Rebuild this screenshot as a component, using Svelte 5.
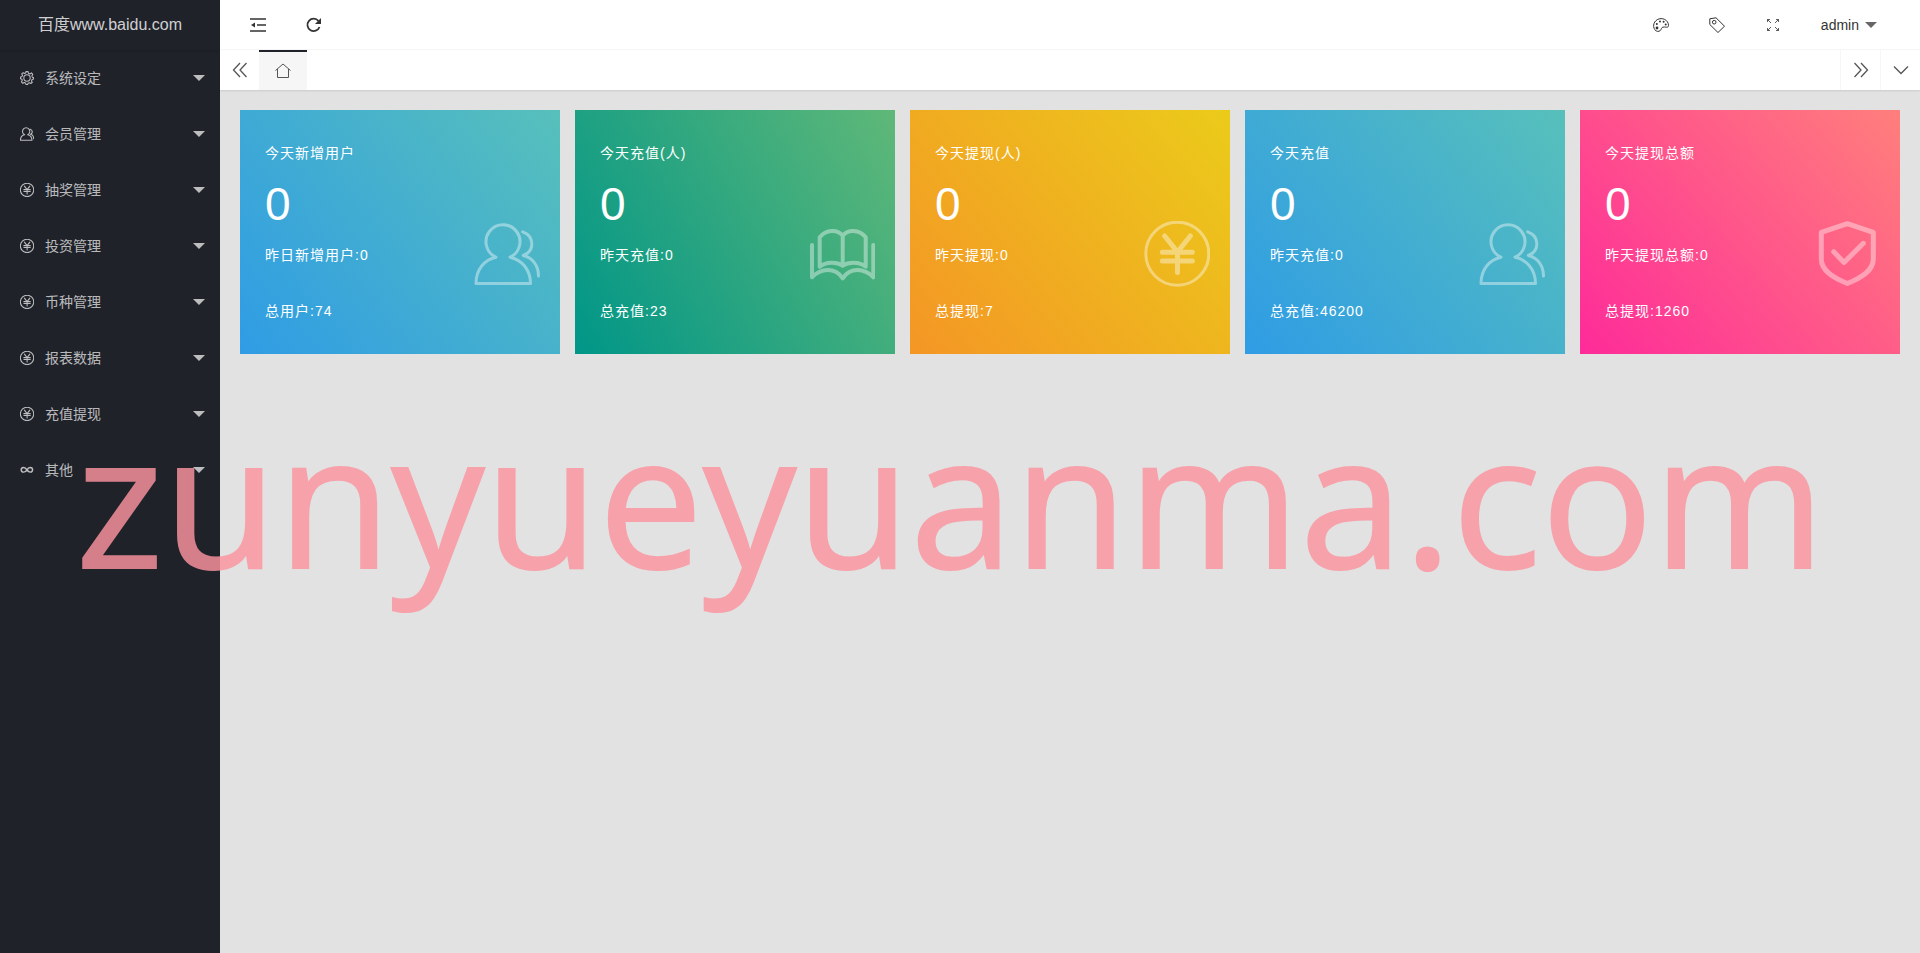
<script lang="ts">
  const menus = [
    { icon: 'gear', title: '系统设定' },
    { icon: 'users', title: '会员管理' },
    { icon: 'yen', title: '抽奖管理' },
    { icon: 'yen', title: '投资管理' },
    { icon: 'yen', title: '币种管理' },
    { icon: 'yen', title: '报表数据' },
    { icon: 'yen', title: '充值提现' },
    { icon: 'infinity', title: '其他' }
  ];

  const cards = [
    { theme: 'blue', icon: 'users', title: '今天新增用户', value: 0, yesterday: '昨日新增用户:0', total: '总用户:74' },
    { theme: 'green', icon: 'book', title: '今天充值(人)', value: 0, yesterday: '昨天充值:0', total: '总充值:23' },
    { theme: 'orange', icon: 'yen', title: '今天提现(人)', value: 0, yesterday: '昨天提现:0', total: '总提现:7' },
    { theme: 'blue', icon: 'users', title: '今天充值', value: 0, yesterday: '昨天充值:0', total: '总充值:46200' },
    { theme: 'pink', icon: 'shield', title: '今天提现总额', value: 0, yesterday: '昨天提现总额:0', total: '总提现:1260' }
  ];
</script>

{#snippet icon(name: string)}
  <svg class="icon" viewBox="0 0 66 66" fill="none" stroke="currentColor" stroke-linecap="round" stroke-linejoin="round" aria-hidden="true">
    {#if name === 'users'}
      <path d="M22 36.2A17 17 0 1 1 36 36.2C47 38.5 56.5 48 56.5 62.5H2C2 48 11 38.5 22 36.2M48.7 10.8C60.5 15 61 30 49.3 34.5C58 36.5 64.5 44 64.5 55" />
    {:else if name === 'book'}
      <g stroke-width="4">
        <path d="M3 24V56.3C12 47 26 46 33.7 57.3C41.4 46 55.4 47 64.3 56.3V24" />
        <path d="M33.7 44.7C28 40.5 17 40.5 10.7 45.7V16.3C17 8 29 8 33.7 15C38.4 8 50.4 8 56.7 16.3V45.7C50.4 40.5 39.4 40.5 33.7 44.7V15" />
      </g>
    {:else if name === 'yen'}
      <circle cx="33.3" cy="32.7" r="31.5" />
      <path class="bold" d="M20.7 15L33.5 31L46.3 15M18.3 31.3H48.3M18.3 40H48.3M33.5 31V51.5" />
    {:else if name === 'shield'}
      <g stroke-width="5">
        <path d="M33.3 2.7L59.3 11.3V38C59.3 50 47 57 33.3 62.5C19.6 57 7.3 50 7.3 38V11.3Z" />
        <path d="M19.7 30.7L30 41.5L49.3 22.3" />
      </g>
    {:else if name === 'gear'}
      <path d="M28 3H38L40 11L47 14L54 9L60 16L56 23L58 29L64 31V38L57 40L54 47L58 53L51 59L44 55L38 58L36 64H29L26 57L20 54L13 58L7 51L11 44L8 38L2 36V29L9 26L12 20L8 14L15 8L22 12L27 9Z" />
      <circle cx="33" cy="33" r="15" />
    {:else if name === 'infinity'}
      <path stroke-width="7" d="M33 33C27 23 22 21 17 21C2 21 2 43 17 43C26 43 30 37 33 32C38 23 43 21 48 21C63 21 63 43 48 43C42 43 38 40 33 33" />
    {/if}
  </svg>
{/snippet}

<div class="layout">
  <aside class="side">
    <h1 class="logo">百度www.baidu.com</h1>
    <nav>
      {#each menus as menu}
        <a class="menu-item" href="#menu">
          {@render icon(menu.icon)}
          <span>{menu.title}</span>
          <i class="caret"></i>
        </a>
      {/each}
    </nav>
  </aside>

  <div class="main">
    <header class="header">
      <div class="group">
        <button class="tool" aria-label="侧边伸缩">
          <svg viewBox="0 0 16 16" fill="none" stroke="currentColor" stroke-width="1.5">
            <path d="M0 2H16M7 8H16M0 14H16" />
            <path d="M5 5.5V10.5L1 8Z" fill="currentColor" stroke="none" />
          </svg>
        </button>
        <button class="tool" aria-label="刷新">
          <svg viewBox="0 0 16 16" fill="none" stroke="currentColor" stroke-width="1.8">
            <path d="M13.5 10A6.2 6.2 0 1 1 12.5 4" />
            <path d="M15 1V7H9Z" fill="currentColor" stroke="none" />
          </svg>
        </button>
      </div>
      <div class="group">
        <button class="tool" aria-label="主题">
          <svg viewBox="0 0 16 16" fill="none" stroke="currentColor">
            <path d="M3.2 14C-.8 11 .1 5 4.2 2.7C9-.2 15.6 3 15.5 8.5C15.4 11 13.2 10.1 11.2 10C9.2 9.9 8.6 11 8.2 12.2C7.2 14.5 5 14.8 3.2 14Z" />
            <g fill="currentColor" stroke="none">
              <circle cx="4" cy="11" r="1.4" />
              <circle cx="3.8" cy="7" r="1" />
              <circle cx="7" cy="4.5" r="1" />
              <circle cx="10.6" cy="4.8" r="1" />
              <circle cx="12.7" cy="7.6" r="1" />
            </g>
          </svg>
        </button>
        <button class="tool" aria-label="便签">
          <svg viewBox="0 0 16 16" fill="none" stroke="currentColor" stroke-linejoin="round">
            <path d="M.8 1.8L7 .8L15.5 9.2L9 15.5L.8 7.5Z" />
            <circle cx="5.2" cy="5.2" r="1.8" />
          </svg>
        </button>
        <button class="tool" aria-label="全屏">
          <svg viewBox="0 0 16 16" fill="none" stroke="currentColor" stroke-width=".8">
            <path d="M2.5 5V2.5H5M2.5 2.5L6 6M11 2.5H13.5V5M13.5 2.5L10 6M2.5 11V13.5H5M2.5 13.5L6 10M11 13.5H13.5V11M13.5 13.5L10 10" />
          </svg>
        </button>
        <button class="user">admin<i class="caret"></i></button>
      </div>
    </header>

    <div class="tabs">
      <button class="tab-btn" aria-label="向左">
        <svg viewBox="0 0 16 16" fill="none" stroke="currentColor" stroke-width="1.3"><path d="M8 1L1.5 8L8 15M14.5 1L8 8L14.5 15" /></svg>
      </button>
      <a class="tab active" href="#home" aria-label="首页">
        <svg viewBox="0 0 16 16" fill="none" stroke="currentColor"><path d="M.5 7.5L8 1L15.5 7.5M2.5 6V14.5H13.5V6" /></svg>
      </a>
      <span class="fill"></span>
      <button class="tab-btn lined" aria-label="向右">
        <svg viewBox="0 0 16 16" fill="none" stroke="currentColor" stroke-width="1.3"><path d="M1.5 1L8 8L1.5 15M8 1L14.5 8L8 15" /></svg>
      </button>
      <button class="tab-btn lined" aria-label="更多">
        <svg viewBox="0 0 16 16" fill="none" stroke="currentColor" stroke-width="1.3"><path d="M1 4.5L8 11.5L15 4.5" /></svg>
      </button>
    </div>

    <main class="cards">
      {#each cards as card}
        <section class="card {card.theme}">
          <div class="card-text">
            <h2>{card.title}</h2>
            <strong>{card.value}</strong>
            <p>{card.yesterday}</p>
            <p>{card.total}</p>
          </div>
          {@render icon(card.icon)}
        </section>
      {/each}
    </main>
  </div>

  <div class="watermark">zunyueyuanma.com</div>
</div>

<style>
  :global(body) {
    background: #e2e2e2;
  }

  .layout {
    position: relative;
    display: flex;
    min-height: 100vh;
    overflow: hidden;
    font: 14px/28px "Liberation Sans", "Noto Sans CJK SC", sans-serif;
    color: #333;
  }

  button {
    border: 0;
    padding: 0;
    background: none;
    font: inherit;
    color: inherit;
    cursor: pointer;
  }

  a {
    color: inherit;
    text-decoration: none;
  }

  svg {
    display: block;
    width: 16px;
    height: 16px;
  }

  .side {
    flex: 0 0 220px;
    background: #20222a;
    color: rgba(255, 255, 255, 0.7);
  }

  .logo {
    margin: 0;
    height: 50px;
    box-shadow: 0 1px 2px rgba(0, 0, 0, 0.15);
    font-size: 16px;
    font-weight: 400;
    line-height: 50px;
    text-align: center;
    color: rgba(255, 255, 255, 0.8);
  }

  .menu-item {
    display: flex;
    align-items: center;
    height: 56px;
    padding: 0 15px 0 20px;
  }

  .menu-item .icon {
    width: 14px;
    height: 14px;
    margin-right: 11px;
    stroke-width: 5;
  }

  .caret {
    border: 6px solid transparent;
    border-top-color: currentColor;
    border-bottom: 0;
  }

  .menu-item .caret {
    margin-left: auto;
  }

  .main {
    flex: 1;
    min-width: 0;
  }

  .header {
    display: flex;
    justify-content: space-between;
    height: 49px;
    padding: 0 43px 0 10px;
    border-bottom: 1px solid #f6f6f6;
    background: #fff;
  }

  .group {
    display: flex;
    align-items: flex-start;
  }

  .tool,
  .user {
    display: flex;
    align-items: center;
    justify-content: center;
    height: 50px;
  }

  .tool {
    width: 56px;
  }

  .user {
    gap: 6px;
    padding-left: 20px;
  }

  .user .caret {
    border-top-color: #666;
  }

  .tabs {
    position: relative;
    display: flex;
    height: 40px;
    background: #fff;
    box-shadow: 0 1px 2px rgba(0, 0, 0, 0.1);
    color: #555;
  }

  .tab-btn,
  .tab {
    display: flex;
    align-items: center;
    justify-content: center;
    width: 39px;
  }

  .lined {
    width: 40px;
    border-left: 1px solid #f6f6f6;
  }

  .tab {
    width: 48px;
  }

  .active {
    box-sizing: border-box;
    border-top: 2px solid #20222a;
    background: #f6f6f6;
  }

  .fill {
    flex: 1;
  }

  .cards {
    display: grid;
    grid-template-columns: repeat(5, 1fr);
    gap: 15px;
    padding: 20px;
  }

  .card {
    display: flex;
    align-items: flex-end;
    justify-content: space-between;
    padding: 29px 20px 29px 25px;
    color: #fff;
    letter-spacing: 1px;
  }

  .card .icon {
    width: 66px;
    height: 66px;
    margin-bottom: 38px;
    stroke-width: 3;
    opacity: 0.4;
  }

  .icon .bold {
    stroke-width: 5;
  }

  .card h2,
  .card p {
    margin: 0;
    font-size: 14px;
    font-weight: 400;
  }

  .card p + p {
    margin-top: 28px;
  }

  .card strong {
    display: block;
    font-size: 46px;
    font-weight: 400;
    line-height: 74px;
  }

  .blue {
    background: linear-gradient(50deg, #2f9ce5, #57c0bb);
  }

  .green {
    background: linear-gradient(60deg, #009688, #5fb878);
  }

  .orange {
    background: linear-gradient(50deg, #f49625, #ebcb1a);
  }

  .pink {
    background: linear-gradient(50deg, #fe2b99, #ff7f7c);
  }

  .watermark {
    position: absolute;
    top: 372px;
    left: 76px;
    font: 186px/247px "Open Sans", sans-serif;
    color: #fc949f;
    -webkit-text-stroke: 2px #fc949f;
    opacity: 0.82;
    white-space: nowrap;
    pointer-events: none;
  }
</style>
